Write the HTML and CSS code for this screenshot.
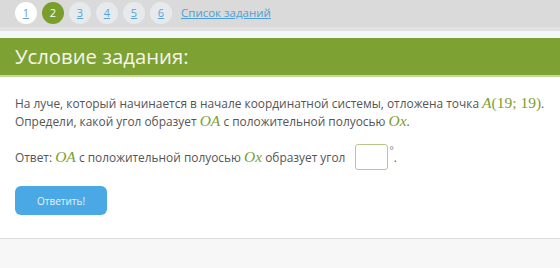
FILE: index.html
```html
<!DOCTYPE html>
<html lang="ru">
<head>
<meta charset="utf-8">
<link rel="stylesheet" href="styles.css">
</head>
<body>
<nav class="topnav">
  <a class="step step-done">1</a>
  <a class="step step-active">2</a>
  <a class="step">3</a>
  <a class="step">4</a>
  <a class="step">5</a>
  <a class="step">6</a>
  <a class="list-link">Список заданий</a>
</nav>
<div class="nav-under"></div>
<div class="gap-strip"></div>
<h1 class="task-title">Условие задания:</h1>
<div class="title-under"></div>
<main class="task">
  <p class="text">На луче, который начинается в начале координатной системы, отложена точка <span class="nw"><span class="m">A</span><span class="mr">(19; 19)</span>.</span> Определи, какой угол образует <span class="m">OA</span> с положительной полуосью <span class="m">Ox</span>.</p>
  <p class="text answer">Ответ: <span class="m">OA</span> с положительной полуосью <span class="m">Ox</span> образует угол <span class="box"></span><span class="deg">°</span>.</p>
  <button class="submit">Ответить!</button>
</main>
<footer class="foot"></footer>
</body>
</html>
```
FILE: styles.css
```css
html, body {
  margin: 0;
  padding: 0;
  background: #ffffff;
  font-family: "Open Sans", "Liberation Sans", sans-serif;
}
.topnav {
  height: 27px;
  background: #dadada;
  display: flex;
  align-items: flex-start;
  padding: 2px 0 0 15px;
  box-sizing: border-box;
  gap: 5px;
}
.step {
  width: 22px;
  height: 22px;
  border-radius: 50%;
  background: #e6eaed;
  color: #5aa3d6;
  font-size: 11px;
  line-height: 22px;
  text-align: center;
  text-decoration: underline;
  flex: none;
}
.step-done {
  background: #ffffff;
  color: #6d9ec4;
}
.step-active {
  background: #7a9e2b;
  color: #ffffff;
  text-decoration: none;
}
.list-link {
  margin-left: 4px;
  font-size: 11.5px;
  line-height: 22px;
  color: #4d9fd6;
  text-decoration: underline;
}
.nav-under {
  height: 4px;
  background: #e2e2e2;
}
.gap-strip {
  height: 7px;
  background: #f4f8fb;
}
.task-title {
  margin: 0;
  height: 37px;
  background: #7da233;
  color: #f6f6ea;
  font-weight: 400;
  font-size: 20.3px;
  line-height: 37px;
  padding-left: 15px;
}
.title-under {
  height: 2px;
  background: #c5d7a0;
}
.task {
  padding: 17px 15px 23px;
}
.text {
  margin: 0;
  font-size: 11.9px;
  line-height: 18px;
  color: #555555;
}
.nw {
  white-space: nowrap;
}
.m {
  font-family: "Liberation Serif", "DejaVu Serif", serif;
  font-style: italic;
  font-size: 15.5px;
  line-height: 1;
  color: #7aa030;
}
.mr {
  font-family: "Liberation Serif", "DejaVu Serif", serif;
  font-size: 15.5px;
  line-height: 1;
  color: #7aa030;
}
.answer {
  margin-top: 14px;
  display: flex;
  align-items: center;
  white-space: pre;
}
.box {
  display: inline-block;
  width: 31px;
  height: 24px;
  border: 1px solid #b6c98a;
  border-radius: 3px;
  margin-left: 6px;
  background: #fff;
}
.deg {
  align-self: flex-start;
  font-size: 10px;
  line-height: 12px;
  margin-left: 2px;
  color: #888;
}
.submit {
  margin-top: 16px;
  width: 92px;
  height: 29px;
  border: none;
  border-radius: 6px;
  background: #4aa8e5;
  color: #e8f4fc;
  font-family: "Open Sans", "Liberation Sans", sans-serif;
  font-size: 10px;
  padding: 0;
  display: block;
}
.foot {
  border-top: 1px solid #dcdcdc;
  background: #f7f7f7;
  height: 30px;
}
```
